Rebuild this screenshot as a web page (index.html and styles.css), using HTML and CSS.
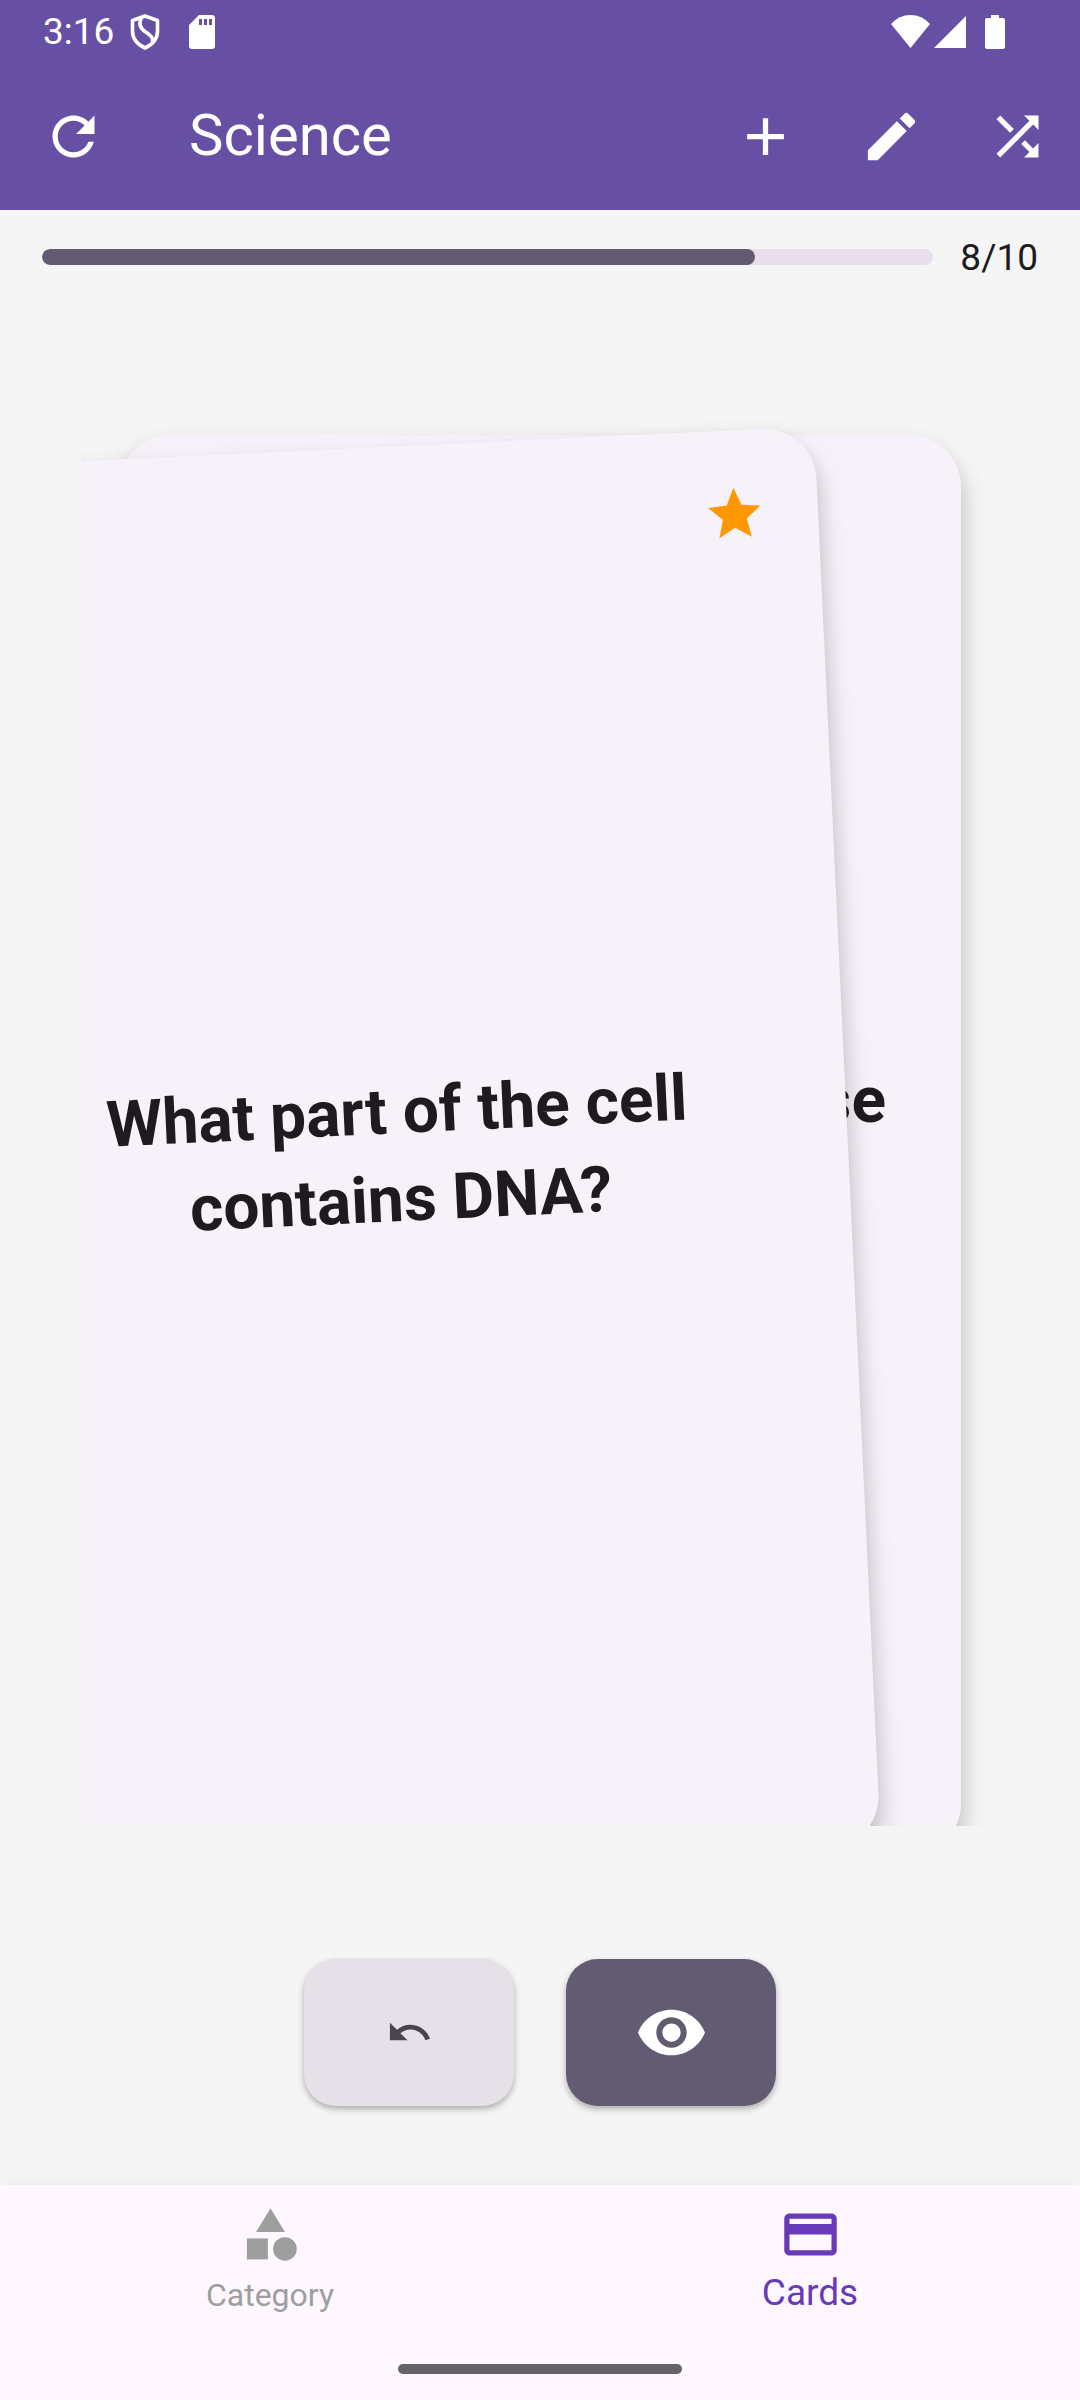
FILE: index.html
```html
<!DOCTYPE html>
<html lang="en">
<head>
<meta charset="utf-8">
<meta name="viewport" content="width=device-width, initial-scale=1">
<title>Science</title>
<link rel="stylesheet" href="styles.css">
</head>
<body>
<header class="top">
  <div class="status">
    <span class="clock">3:16</span>
    <svg class="status-shield" viewBox="0 0 30 36" aria-hidden="true"><path d="M15 2 2.500 6.500V17c0 8 5 13.500 12.500 17C22.500 30.500 27.500 25 27.500 17V6.500Z" fill="none" stroke="#fff" stroke-width="3.600" stroke-linejoin="round"/><path d="M11.500 3.500c-3 6-1.500 10.500 3.500 14 5.500 4 8.500 6 7.500 10.500" fill="none" stroke="#fff" stroke-width="3.600"/></svg>
    <svg class="status-sd" viewBox="0 0 26 34" aria-hidden="true"><path fill="#fff" fill-rule="evenodd" d="M10 0h13a3 3 0 0 1 3 3v28a3 3 0 0 1-3 3H3a3 3 0 0 1-3-3V10ZM10 4v6h3V4Zm5 0v6h3V4Zm5 0v6h3V4Z"/></svg>
    <span class="status-right">
      <svg class="status-wifi" viewBox="0 0 39 33" aria-hidden="true"><path fill="#fff" d="M19.500 33 0 9Q8 0 19.500 0T39 9Z"/></svg>
      <svg class="status-signal" viewBox="0 0 32 32" aria-hidden="true"><path fill="#fff" d="M0 32 32 0V32Z"/></svg>
      <svg class="status-battery" viewBox="0 0 20 34" aria-hidden="true"><path fill="#fff" d="M6 0h8v3h4a2 2 0 0 1 2 2v27a2 2 0 0 1-2 2H2a2 2 0 0 1-2-2V5a2 2 0 0 1 2-2h4Z"/></svg>
    </span>
  </div>
  <div class="appbar">
    <button class="bar-button bar-leading" aria-label="Restart"><svg class="icon" viewBox="0 0 24 24"><path d="M17.650 6.350C16.200 4.900 14.210 4 12 4c-4.420 0-7.990 3.580-7.990 8s3.570 8 7.990 8c3.730 0 6.840-2.550 7.730-6h-2.080c-.820 2.330-3.040 4-5.650 4-3.310 0-6-2.690-6-6s2.690-6 6-6c1.660 0 3.140.690 4.220 1.780L13 11h7V4z"/></svg></button>
    <h1 class="title">Science</h1>
    <button class="bar-button" aria-label="Add card"><svg class="icon" viewBox="0 0 24 24"><path d="M19 13h-6v6h-2v-6H5v-2h6V5h2v6h6z"/></svg></button>
    <button class="bar-button" aria-label="Edit"><svg class="icon" viewBox="0 0 24 24"><path d="M3 17.250V21h3.750L17.810 9.940l-3.750-3.750zM20.710 7.040c.390-.390.390-1.020 0-1.410l-2.340-2.340c-.390-.390-1.020-.390-1.410 0l-1.830 1.830 3.750 3.750z"/></svg></button>
    <button class="bar-button" aria-label="Shuffle"><svg class="icon" viewBox="0 0 24 24"><path d="M10.590 9.170 5.410 4 4 5.410l5.170 5.170zM14.500 4l2.040 2.040L4 18.590 5.410 20 17.960 7.460 20 9.500V4zm.330 9.410-1.410 1.410 3.130 3.130L14.500 20H20v-5.500l-2.040 2.040z"/></svg></button>
  </div>
</header>
<main class="main">
  <div class="progress-row">
    <progress class="progress" id="progress" value="8" max="10"></progress>
    <label class="count" for="progress">8/10</label>
  </div>
  <section class="deck">
    <article class="card card-back"><p class="question">se</p></article>
    <article class="card card-front">
      <svg class="star" viewBox="0 0 24 24" aria-hidden="true"><path d="M12 17.270 18.180 21l-1.640-7.030L22 9.240l-7.190-.610L12 2 9.190 8.630 2 9.240l5.460 4.730L5.820 21z"/></svg>
      <p class="question">What part of the cell<br>contains DNA?</p>
    </article>
  </section>
  <div class="actions">
    <button class="action action-undo" aria-label="Undo"><svg class="icon-undo" viewBox="0 0 24 24"><path d="M12.500 8c-2.650 0-5.050.990-6.900 2.600L2 7v9h9l-3.620-3.620c1.390-1.160 3.160-1.880 5.120-1.880 3.540 0 6.550 2.310 7.600 5.500l2.370-.780C21.080 11.030 17.150 8 12.500 8z"/></svg></button>
    <button class="action action-show" aria-label="Show answer"><svg class="icon-eye" viewBox="0 0 24 24"><path d="M12 4.500C7 4.500 2.730 7.610 1 12c1.730 4.390 6 7.500 11 7.500s9.270-3.110 11-7.500c-1.730-4.390-6-7.500-11-7.500zM12 17c-2.760 0-5-2.240-5-5s2.240-5 5-5 5 2.240 5 5-2.240 5-5 5zm0-8c-1.660 0-3 1.340-3 3s1.340 3 3 3 3-1.340 3-3-1.340-3-3-3z"/></svg></button>
  </div>
</main>
<footer class="bottom">
  <nav class="tabs">
    <a class="tab" href="#category"><svg class="icon" viewBox="0 0 24 24"><path d="m12 2-5.500 9h11z"/><circle cx="17.500" cy="17.500" r="4.500"/><path d="M3 13.500h8v8H3z"/></svg><span>Category</span></a>
    <a class="tab tab-active" href="#cards" aria-current="page"><svg class="icon" viewBox="0 0 24 24"><path d="M20 4H4c-1.110 0-1.990.890-1.990 2L2 18c0 1.110.890 2 2 2h16c1.110 0 2-.890 2-2V6c0-1.110-.890-2-2-2zm0 14H4v-6h16zm0-10H4V6h16z"/></svg><span>Cards</span></a>
  </nav>
  <div class="home-indicator"></div>
</footer>
</body>
</html>
```
FILE: styles.css
```css
* {
  box-sizing: border-box;
}

body {
  margin: 0;
  min-height: 100vh;
  display: flex;
  flex-direction: column;
  background: #f5f5f5;
  color: #1d1b20;
  font-family: Roboto, "Liberation Sans", sans-serif;
}

button {
  border: 0;
  padding: 0;
  font: inherit;
  color: inherit;
  background: none;
  display: flex;
  align-items: center;
  justify-content: center;
}

svg {
  display: block;
  flex: none;
}

.icon {
  width: 63px;
  height: 63px;
  fill: currentColor;
}

/* Status bar and app bar */
.top {
  background: #6750a4;
  color: #fff;
}

.status {
  height: 63px;
  padding: 0 75px 0 43px;
  display: flex;
  align-items: center;
}

.clock {
  font-size: 37px;
  line-height: 63px;
}

.status-shield {
  width: 30px;
  height: 36px;
  margin-left: 16px;
}

.status-sd {
  width: 26px;
  height: 34px;
  margin-left: 29px;
}

.status-right {
  margin-left: auto;
  display: flex;
  align-items: center;
}

.status-wifi {
  width: 39px;
  height: 33px;
}

.status-signal {
  width: 32px;
  height: 32px;
  margin: 0 19px 0 4px;
}

.status-battery {
  width: 20px;
  height: 34px;
}

.appbar {
  height: 147px;
  display: flex;
  align-items: center;
}

.bar-button {
  width: 126px;
  height: 126px;
}

.bar-leading {
  width: 147px;
  margin-right: 42px;
}

.title {
  flex: 1;
  margin: 0;
  padding-bottom: 4px;
  font-size: 58px;
  line-height: 74px;
  font-weight: 400;
}

/* Study area */
.main {
  flex: 1;
  display: flex;
  flex-direction: column;
}

.progress-row {
  height: 94px;
  padding: 0 42px;
  display: flex;
  align-items: center;
  gap: 27px;
}

.progress {
  flex: 1;
  min-width: 0;
  height: 16px;
  appearance: none;
  border: 0;
  border-radius: 8px;
  overflow: hidden;
  background: #e8deec;
}

.progress::-webkit-progress-bar {
  background: #e8deec;
}

.progress::-webkit-progress-value {
  background: #625b71;
  border-radius: 8px;
}

.count {
  padding-top: 2px;
  font-size: 37px;
  line-height: 52px;
}

.deck {
  flex: 1;
  min-height: 900px;
  margin: 0 81px;
  position: relative;
  overflow: hidden;
}

/* The stacked cards overlap, and hang below the clipped deck */
.card {
  position: absolute;
  top: 131px;
  bottom: -30px;
  display: flex;
  flex-direction: column;
  justify-content: center;
  background: #f7f2fa;
  border-radius: 52px;
  box-shadow: 0 14px 24px rgba(0, 0, 0, 0.26);
}

.card-back {
  left: 38px;
  right: 38px;
  padding: 0 75px 90px;
  text-align: right;
}

.card-front {
  left: -131px;
  right: 151px;
  text-align: center;
  transform: translateY(12px) rotate(-2.7deg);
}

.card-front .question {
  padding-bottom: 4px;
}

.question {
  margin: 0;
  font-size: 64px;
  line-height: 88px;
  font-weight: 700;
}

.star {
  position: absolute;
  top: 52px;
  right: 52px;
  width: 63px;
  height: 63px;
  fill: #ff9800;
}

.actions {
  padding: 133px 0 79px;
  display: flex;
  justify-content: center;
  gap: 52px;
}

.action {
  width: 210px;
  height: 147px;
  border-radius: 32px;
  box-shadow: 0 3px 6px rgba(0, 0, 0, 0.3);
}

.action-undo {
  background: #e6e0e9;
  color: #49454f;
}

.action-show {
  background: #625b71;
  color: #fff;
}

.icon-undo {
  width: 47px;
  height: 47px;
  fill: currentColor;
}

.icon-eye {
  width: 73px;
  height: 73px;
  fill: currentColor;
}

/* Bottom navigation */
.bottom {
  background: #fef7ff;
  box-shadow: 0 0 20px rgba(0, 0, 0, 0.04);
  padding: 18px 0 26px;
}

.tabs {
  display: flex;
}

.tab {
  flex: 1;
  height: 161px;
  display: flex;
  flex-direction: column;
  align-items: center;
  gap: 4px;
  color: #9e9e9e;
  font-size: 32px;
  line-height: 50px;
  text-decoration: none;
}

.tab-active {
  color: #673ab7;
  font-size: 37px;
  line-height: 46px;
}

.home-indicator {
  width: 284px;
  height: 10px;
  margin: 0 auto;
  border-radius: 5px;
  background: #666367;
}
```
